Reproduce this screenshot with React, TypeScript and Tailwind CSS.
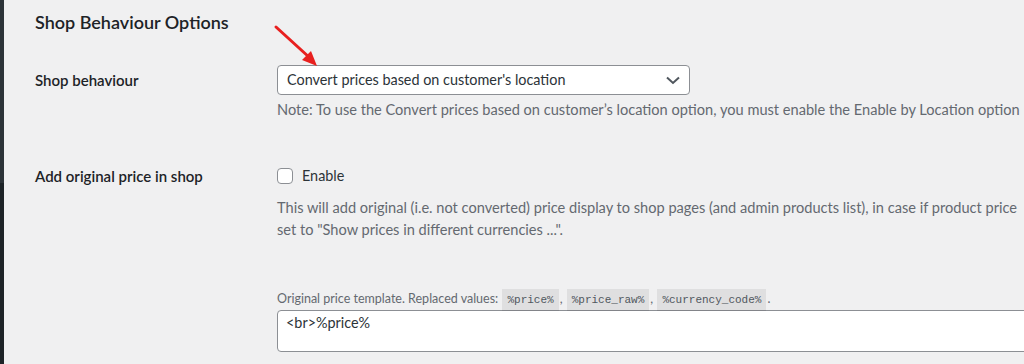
import React from "react";

const FONT = "font-['Lato','Noto_Sans',sans-serif]";

function Chip({ children }: { children: React.ReactNode }) {
  return (
    <code className="mx-[1px] inline-block bg-[rgba(0,0,0,0.07)] px-[5px] py-[2px] align-middle font-['Liberation_Mono',monospace] text-[11px] leading-[18px] text-[#50575e]">
      {children}
    </code>
  );
}

function Arrow() {
  return (
    <svg
      className="pointer-events-none absolute left-[266px] top-[22px]"
      width="56"
      height="52"
      viewBox="0 0 56 52"
    >
      <line x1="6" y1="5" x2="40" y2="36" stroke="#e8201f" strokeWidth="3" strokeLinecap="round" />
      <polygon points="47,44 32,38 41,29" fill="#e8201f" />
    </svg>
  );
}

export default function App() {
  return (
    <div className={`flex h-[364px] w-[1024px] overflow-hidden bg-[#f0f0f1] ${FONT}`}>
      <div className="flex w-[4px] shrink-0 flex-col">
        <div className="h-[183px] bg-[#2c3338]" />
        <div className="flex-1 bg-[#1d2327]" />
      </div>

      <div className="relative flex-1 pl-[31px]">
        <Arrow />
        <h2 className="mt-[10px] text-[18px] font-semibold leading-[24px] text-[#1d2327]">
          Shop Behaviour Options
        </h2>

        <div className="mt-[31px] grid grid-cols-[242px_1fr]">
          <div className="pt-[5px] text-[15px] font-semibold leading-[20px] text-[#1d2327]">
            Shop behaviour
          </div>
          <div>
            <div className="flex h-[30px] w-[413px] items-center justify-between rounded-[4px] border border-[#8c8f94] bg-white pl-[9px] pr-[8px] text-[14.4px] text-[#2c3338]">
              <span>Convert prices based on customer's location</span>
              <svg width="16" height="16" viewBox="0 0 16 16">
                <polyline points="2,5.5 8,11 14,5.5" fill="none" stroke="#50575e" strokeWidth="2" />
              </svg>
            </div>
            <p className="mt-[5px] whitespace-nowrap text-[14.6px] leading-[20px] text-[#646970]">
              Note: To use the Convert prices based on customer’s location option, you must enable the Enable by Location option
            </p>
          </div>
        </div>

        <div className="mt-[46px] grid grid-cols-[242px_1fr]">
          <div className="text-[15px] font-semibold leading-[20px] text-[#1d2327]">
            Add original price in shop
          </div>
          <div>
            <label className="flex h-[20px] items-center gap-[9px] text-[14.4px] text-[#2c3338]">
              <span className="h-[16px] w-[16px] rounded-[4px] border border-[#8c8f94] bg-white" />
              Enable
            </label>
            <div className="mt-[11px] whitespace-nowrap text-[14.6px] leading-[22px] text-[#646970]">
              <p>
                This will add original (i.e. not converted) price display to shop pages (and admin products list), in case if product price
              </p>
              <p>set to "Show prices in different currencies ...".</p>
            </div>

            <p className="mt-[47px] h-[22px] whitespace-nowrap text-[12.5px] leading-[22px] text-[#646970]">
              Original price template. Replaced values: <Chip>%price%</Chip>, <Chip>%price_raw%</Chip>,{" "}
              <Chip>%currency_code%</Chip>.
            </p>
            <div className="h-[42px] w-[800px] rounded-[4px] border border-[#8c8f94] bg-white pl-[8px] pt-[2px] text-[14.4px] leading-[20px] text-[#2c3338]">
              {"<br>%price%"}
            </div>
          </div>
        </div>
      </div>
    </div>
  );
}
